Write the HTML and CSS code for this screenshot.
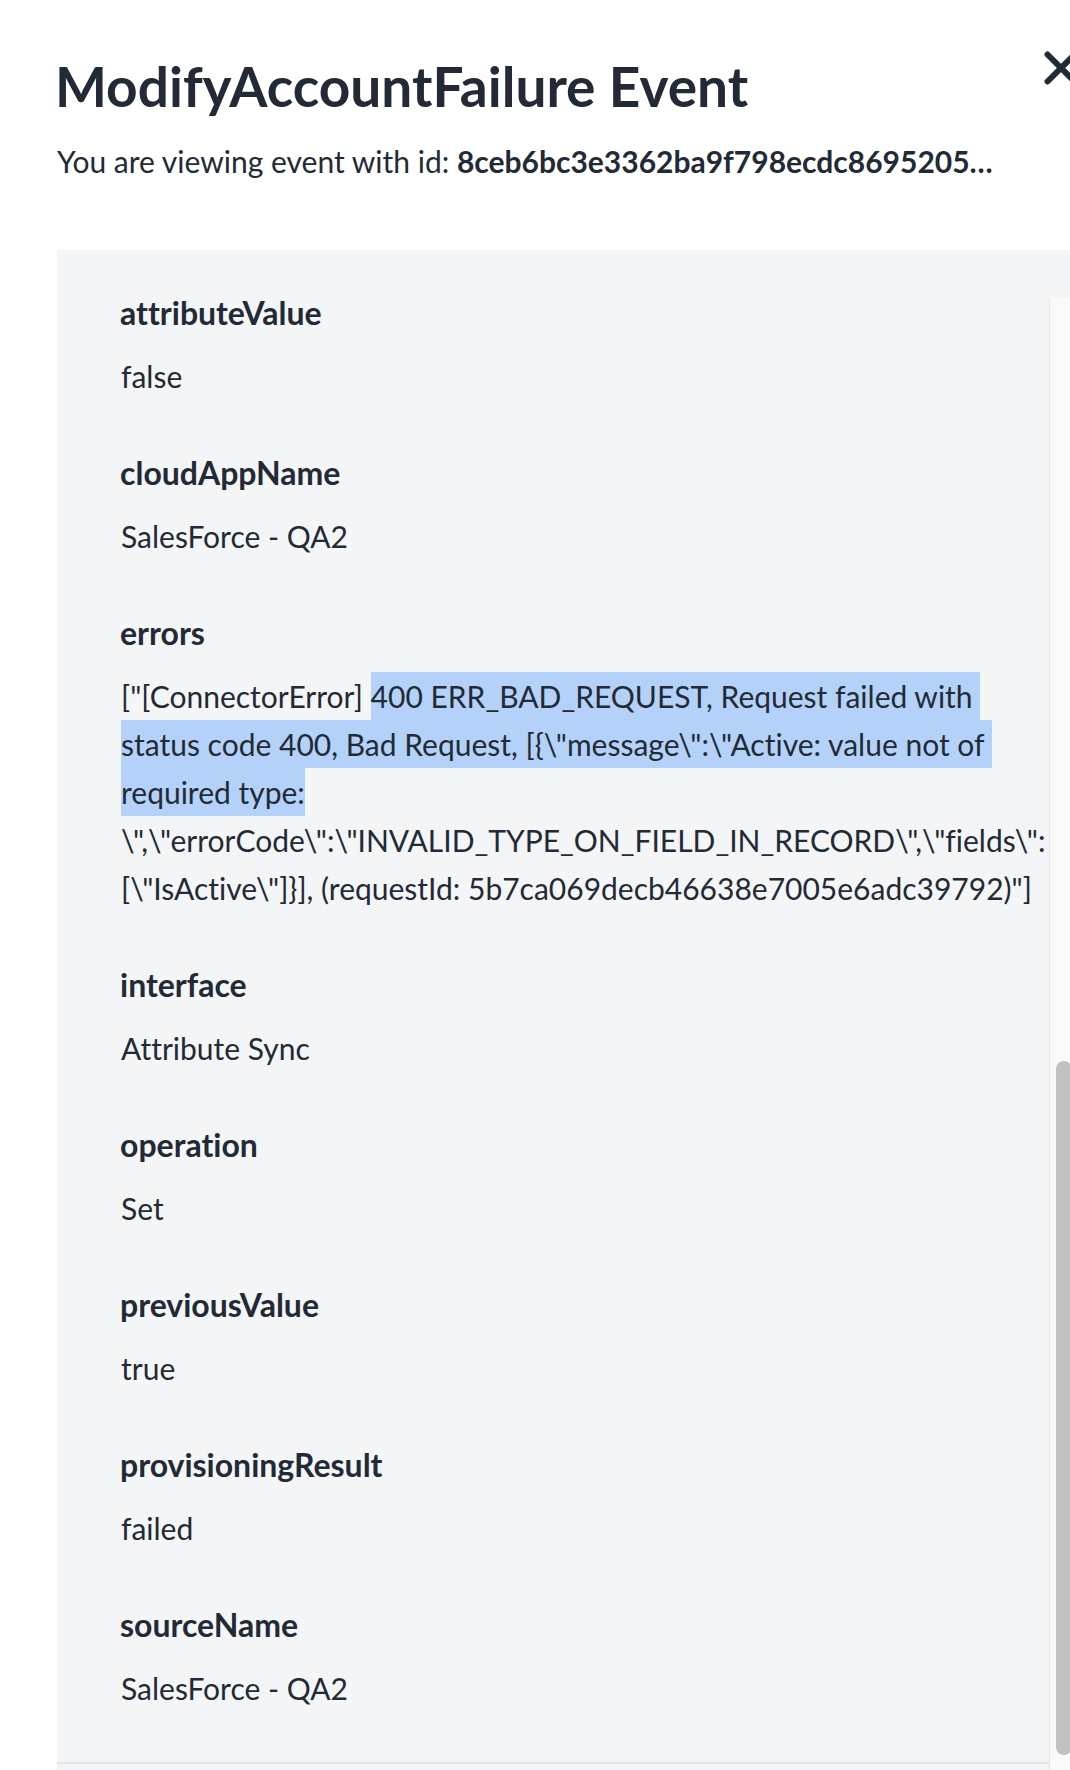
FILE: index.html
```html
<!DOCTYPE html>
<html lang="en">
<head>
<meta charset="utf-8">
<title>ModifyAccountFailure Event</title>
<link rel="stylesheet" href="styles.css">
</head>
<body>
<header class="header">
  <div class="titles">
    <h1 class="title">ModifyAccountFailure Event</h1>
    <p class="subtitle">You are viewing event with id: <strong class="event-id">8ceb6bc3e3362ba9f798ecdc8695205…</strong></p>
  </div>
  <button class="close" type="button" aria-label="Close">
    <svg viewBox="0 0 34 34" width="34" height="34" aria-hidden="true">
      <path d="M3.5 3.5 L30.5 30.5 M30.5 3.5 L3.5 30.5" stroke="currentColor" stroke-width="6" stroke-linecap="round" fill="none"/>
    </svg>
  </button>
</header>
<section class="panel">
  <dl class="fields">
    <div class="field"><dt class="label">attributeValue</dt><dd class="value">false</dd></div>
    <div class="field"><dt class="label">cloudAppName</dt><dd class="value">SalesForce - QA2</dd></div>
    <div class="field"><dt class="label">errors</dt>
      <dd class="value">
        <div class="line">["[ConnectorError] <span class="sel sel-end">400 ERR_BAD_REQUEST, Request failed with</span></div>
        <div class="line"><span class="sel sel-end">status code 400, Bad Request, [{\"message\":\"Active: value not of</span></div>
        <div class="line"><span class="sel">required type:</span></div>
        <div class="line">\",\"errorCode\":\"INVALID_TYPE_ON_FIELD_IN_RECORD\",\"fields\":</div>
        <div class="line">[\"IsActive\"]}], (requestId: 5b7ca069decb46638e7005e6adc39792)"]</div>
      </dd>
    </div>
    <div class="field"><dt class="label">interface</dt><dd class="value">Attribute Sync</dd></div>
    <div class="field"><dt class="label">operation</dt><dd class="value">Set</dd></div>
    <div class="field"><dt class="label">previousValue</dt><dd class="value">true</dd></div>
    <div class="field"><dt class="label">provisioningResult</dt><dd class="value">failed</dd></div>
    <div class="field"><dt class="label">sourceName</dt><dd class="value">SalesForce - QA2</dd></div>
  </dl>
  <div class="track"><div class="thumb"></div></div>
</section>
</body>
</html>
```
FILE: styles.css
```css
html, body {
  margin: 0;
  padding: 0;
  overflow: hidden;
  background: #ffffff;
}

body {
  font-family: Lato, "Noto Sans", sans-serif;
  font-variant-ligatures: none;
  color: #222a36;
  width: 1070px;
  height: 1770px;
}

.header {
  display: flex;
  align-items: flex-start;
  justify-content: space-between;
  padding: 51px 0 0 55px;
  margin-right: -8px;
}

.titles {
  display: flex;
  flex-direction: column;
  padding-top: 2px;
}

.title {
  margin: 0;
  font-size: 55px;
  line-height: 66px;
  font-weight: 700;
}

.subtitle {
  margin: 18px 0 0 2px;
  font-size: 30px;
  line-height: 48px;
  font-weight: 400;
  white-space: nowrap;
}

.event-id {
  font-weight: 700;
}

.close {
  border: 0;
  padding: 0;
  margin: 0;
  background: none;
  color: #222a36;
  width: 34px;
  height: 34px;
  display: block;
}

.close svg {
  display: block;
}

.panel {
  margin: 65px -12px 0 57px;
  background: #f4f5f7;
  display: flex;
  align-items: flex-start;
  height: 1520px;
}

.fields {
  margin: 0;
  width: 992px;
  box-sizing: border-box;
  padding: 39px 0 50px 63px;
  border-bottom: 2px solid #e3e4e6;
}

.field {
  margin: 0 0 49px;
}

.field:last-child {
  margin-bottom: 0;
}

.label {
  margin: 0 0 15px;
  font-size: 32px;
  line-height: 48px;
  font-weight: 700;
}

.value {
  margin: 0;
  font-size: 30px;
  line-height: 48px;
  font-weight: 400;
  padding-left: 1px;
}

.line {
  white-space: nowrap;
  height: 48px;
}

.sel {
  display: inline-block;
  background: #b4d2f9;
  height: 48px;
  vertical-align: top;
}

.sel-end {
  padding-right: 7px;
}

.track {
  align-self: stretch;
  margin-top: 48px;
  flex: 1;
  background: #fafafa;
  border-left: 1px solid #e6e6e6;
  padding-left: 6px;
}

.thumb {
  margin-top: 763px;
  width: 16px;
  height: 694px;
  border-radius: 8px;
  background: #c1c1c1;
}
```
